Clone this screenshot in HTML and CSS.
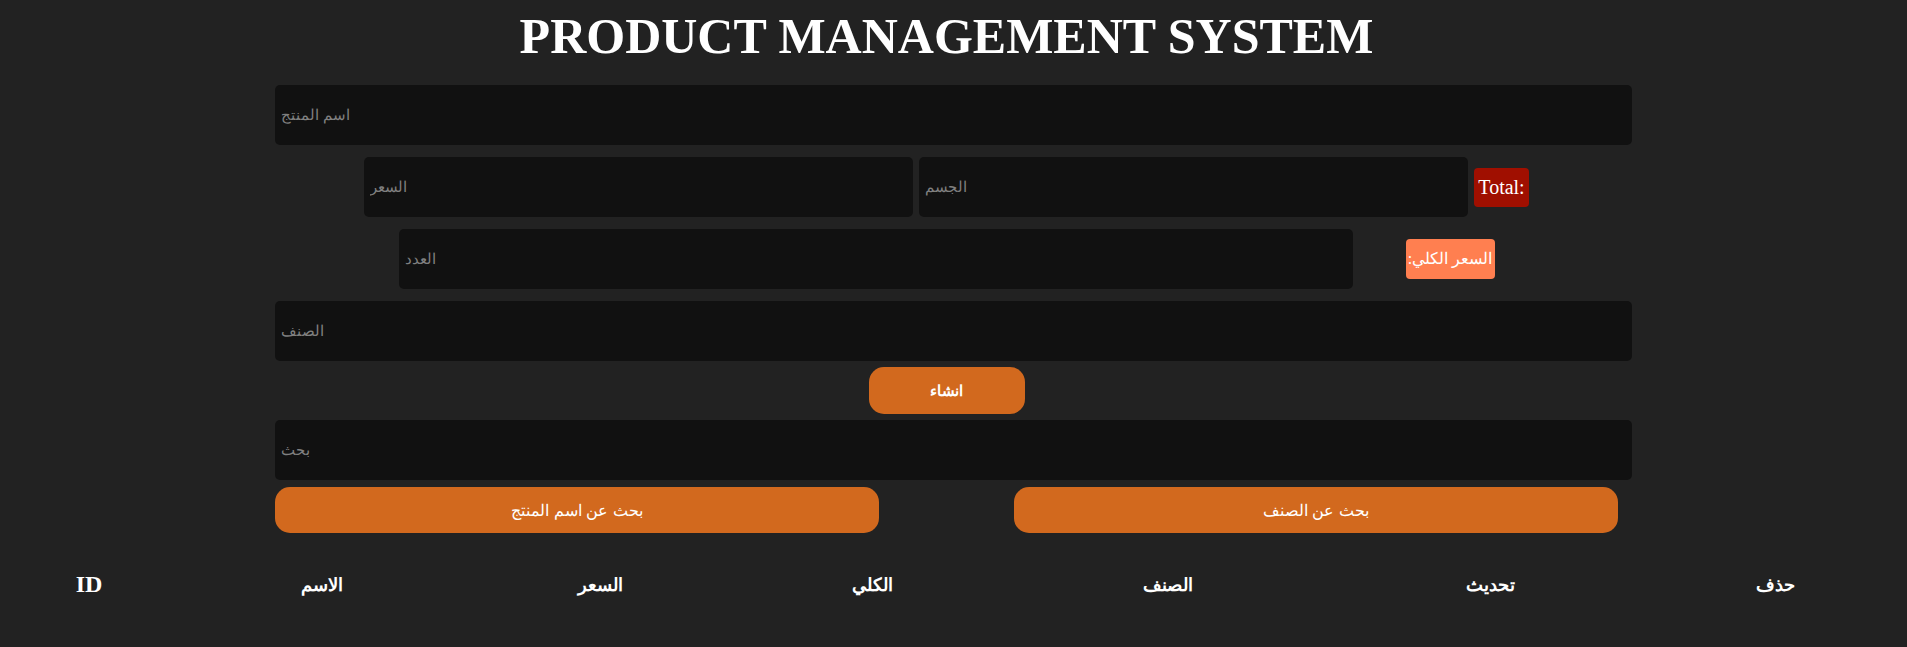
FILE: index.html
```html
<!DOCTYPE html>
<html lang="ar">
<head>
<meta charset="utf-8">
<title>Product Management System</title>
<link rel="stylesheet" href="styles.css">
</head>
<body>
<div class="crud">
  <h1 class="title">PRODUCT MANAGEMENT SYSTEM</h1>
  <div class="inputs">
    <input class="field" type="text" placeholder="اسم المنتج">
    <div class="price-row">
      <input class="field half" type="number" placeholder="السعر">
      <input class="field half" type="number" placeholder="الجسم">
      <small class="total">Total:</small>
    </div>
    <div class="count-row">
      <input class="field count" type="number" placeholder="العدد">
      <small class="grand">:السعر الكلي</small>
    </div>
    <input class="field" type="text" placeholder="الصنف">
    <div class="create-row">
      <button class="btn create">انشاء</button>
    </div>
  </div>
  <div class="search-block">
    <input class="field" type="text" placeholder="بحث">
    <div class="search-btns">
      <button class="btn search">بحث عن اسم المنتج</button>
      <button class="btn search">بحث عن الصنف</button>
    </div>
  </div>
</div>
<table class="products">
  <thead>
    <tr>
      <th class="c1">ID</th>
      <th class="c2">الاسم</th>
      <th class="c3">السعر</th>
      <th class="c4">الكلي</th>
      <th class="c5">الصنف</th>
      <th class="c6">تحديث</th>
      <th class="c7">حذف</th>
    </tr>
  </thead>
  <tbody></tbody>
</table>
</body>
</html>
```
FILE: styles.css
```css
html, body {
  background: #222222;
}
body {
  margin: 8px;
  color: #ffffff;
  font-family: "Liberation Serif", serif;
}
.crud {
  width: 1357px;
  margin: 0 auto;
}
.title {
  margin: 0 0 20px;
  padding-right: 14px;
  text-align: center;
  font-size: 50px;
  font-weight: bold;
  line-height: 57px;
}
.inputs, .search-block {
  display: flex;
  flex-direction: column;
}
.field {
  box-sizing: border-box;
  display: block;
  width: 100%;
  height: 60px;
  margin: 0;
  padding: 0 6px;
  border: none;
  outline: none;
  border-radius: 5px;
  background: #111111;
  color: #ffffff;
  font-family: "Liberation Serif", serif;
  font-size: 15px;
}
.field::placeholder {
  color: #808080;
}
.price-row, .count-row {
  display: flex;
  align-items: center;
  justify-content: center;
  padding-right: 14px;
  margin-top: 12px;
}
.price-row {
  gap: 6px;
}
.price-row + .count-row {
  margin-bottom: 12px;
}
.field.half {
  width: 549px;
}
.field.count {
  width: 954px;
}
.count-row {
  gap: 53px;
}
.total, .grand {
  display: block;
  box-sizing: border-box;
  padding: 0 4px;
  border-radius: 4px;
  color: #ffffff;
  font-family: "Liberation Serif", serif;
  font-size: 20px;
  line-height: 39px;
  height: 39px;
  text-align: center;
}
.total {
  background: #a00f00;
}
.grand {
  width: 89px;
  padding: 0;
  background: #ff7f50;
  height: 40px;
  line-height: 40px;
  font-size: 16px;
  white-space: nowrap;
}
.create-row {
  display: flex;
  justify-content: center;
  padding-right: 14px;
  margin: 6px 0;
}
.btn {
  border: none;
  color: #ffffff;
  background: #d2691e;
  cursor: pointer;
  font-family: "Liberation Sans", sans-serif;
}
.create {
  width: 156px;
  height: 47px;
  border-radius: 15px;
  font-size: 15px;
  font-weight: bold;
}
.search-btns {
  display: flex;
  gap: 135px;
  margin-top: 7px;
}
.search {
  width: 604px;
  height: 46px;
  border-radius: 15px;
  font-size: 16px;
}
.products {
  width: 1880px;
  margin-top: 26px;
  border-collapse: collapse;
  table-layout: fixed;
}
.products th {
  padding: 12px 0;
  text-align: center;
  font-size: 18px;
  font-weight: bold;
}
.products th.c1 {
  font-size: 24px;
}
.c1 { width: 162px; }
.c2 { width: 304px; }
.c3 { width: 252px; }
.c4 { width: 292px; }
.c5 { width: 300px; }
.c6 { width: 344px; }
.c7 { width: 226px; }
```
